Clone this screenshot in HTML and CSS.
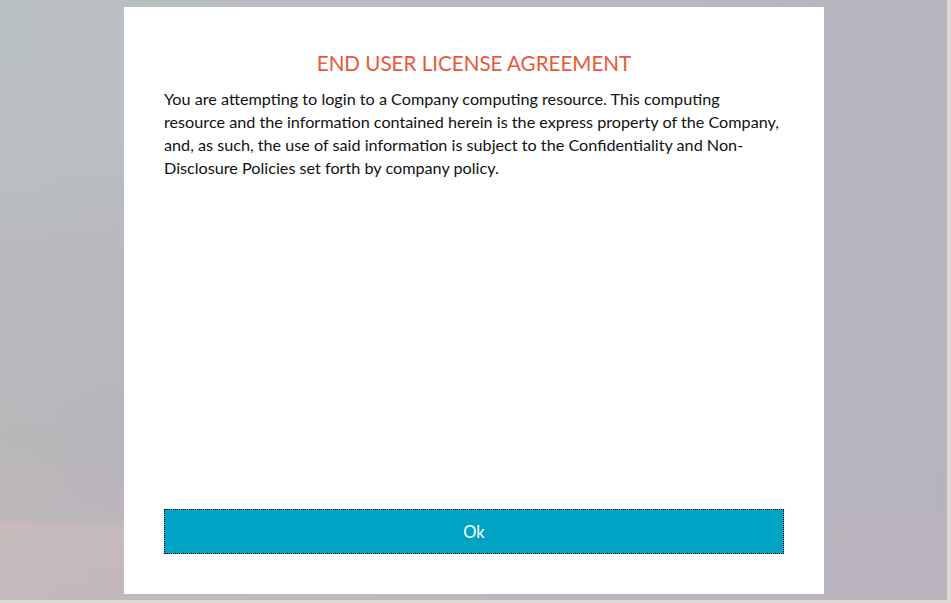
FILE: index.html
```html
<!DOCTYPE html>
<html lang="en">
<head>
<meta charset="utf-8">
<title>End User License Agreement</title>
<link rel="stylesheet" href="styles.css">
</head>
<body>
<div class="screen">
  <div class="modal">
    <h1 class="title">END USER LICENSE AGREEMENT</h1>
    <p class="text">You are attempting to login to a Company computing resource. This computing resource and the information contained herein is the express property of the Company, and, as such, the use of said information is subject to the Confidentiality and Non-Disclosure Policies set forth by company policy.</p>
    <button class="ok" type="button">Ok</button>
  </div>
</div>
</body>
</html>
```
FILE: styles.css
```css
html {
  background: #dcd9d2;
}
body {
  margin: 0;
  width: 951px;
  height: 603px;
  overflow: hidden;
}
.screen {
  width: 947px;
  height: 600px;
  padding: 7px 0 0 124px;
  box-sizing: border-box;
  background:
    linear-gradient(to right, rgba(185,192,194,0) 0%, rgba(183,179,190,0.9) 100%),
    linear-gradient(to bottom, #b9c0c2 0%, #b9bfc1 28%, #b9b8bc 45%, #bab6ba 86%, #c6babb 87.5%, #c4b9bd 100%);
}
.modal {
  width: 700px;
  height: 587px;
  box-sizing: border-box;
  background: #ffffff;
  padding: 43px 40px 40px;
  display: flex;
  flex-direction: column;
}
.title {
  margin: 0;
  font-family: Lato, "Open Sans", sans-serif;
  font-weight: 400;
  font-size: 20.6px;
  line-height: 26px;
  color: #e8583a;
  text-align: center;
}
.text {
  margin: 11px 0 0;
  font-family: Lato, "Open Sans", sans-serif;
  font-size: 16.2px;
  line-height: 23px;
  color: #111111;
  flex: 1;
}
.ok {
  height: 45px;
  width: 100%;
  border: 1px dotted #000;
  background: #00a3c4;
  color: #ffffff;
  font-family: Lato, "Open Sans", sans-serif;
  font-size: 16.5px;
  padding: 0;
}
```
